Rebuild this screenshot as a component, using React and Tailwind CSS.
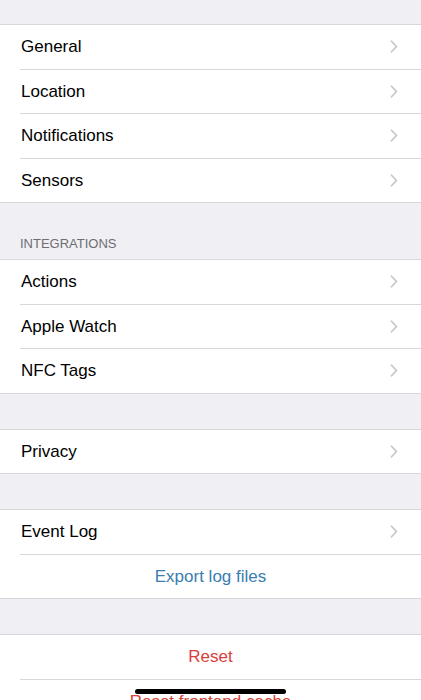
import React from "react";

const Chevron = () => (
  <svg width="8" height="13" viewBox="0 0 8 13" fill="none" className="shrink-0">
    <path d="M1.5 1.25 L6.5 6.5 L1.5 11.75" stroke="#c7c7cc" strokeWidth="1.8" strokeLinecap="round" strokeLinejoin="round" />
  </svg>
);

const Row = ({ label, last }) => (
  <div className={"flex items-stretch bg-white pl-5 " + (last ? "h-[43.5px]" : "h-[44.5px]")}>
    <div className={"flex flex-1 items-center justify-between pr-[23px] pl-px " + (last ? "" : "border-b border-[#d8d8dc]")}>
      <span className="text-[17px] text-black">{label}</span>
      <Chevron />
    </div>
  </div>
);

const ActionRow = ({ label, color, last }) => (
  <div className={"flex items-stretch bg-white pl-5 " + (last ? "h-[43.5px]" : "h-[44.5px]")}>
    <div className={"flex flex-1 items-center justify-center pr-5 " + (last ? "" : "border-b border-[#d8d8dc]")}>
      <span className={"text-[17px] " + color}>{label}</span>
    </div>
  </div>
);

const Group = ({ children }) => (
  <div className="border-y border-[#d8d8dc] bg-white">{children}</div>
);

export default function App() {
  return (
    <div className="relative h-[700px] overflow-hidden bg-[#efeff4]" style={{ fontFamily: '"Liberation Sans", Arial, sans-serif' }}>
      <div className="h-6" />
      <Group>
        <Row label="General" />
        <Row label="Location" />
        <Row label="Notifications" />
        <Row label="Sensors" last />
      </Group>
      <div className="flex h-[56px] items-end px-5 pb-[6px]">
        <span className="text-[13px] text-[#6d6d72]">INTEGRATIONS</span>
      </div>
      <Group>
        <Row label="Actions" />
        <Row label="Apple Watch" />
        <Row label="NFC Tags" last />
      </Group>
      <div className="h-[35px]" />
      <Group>
        <Row label="Privacy" last />
      </Group>
      <div className="h-[35px]" />
      <Group>
        <Row label="Event Log" />
        <ActionRow label="Export log files" color="text-[#3a7db0]" last />
      </Group>
      <div className="h-[35px]" />
      <Group>
        <ActionRow label="Reset" color="text-[#d8403a]" />
        <ActionRow label="Reset frontend cache" color="text-[#d8403a]" last />
      </Group>
      <div className="absolute bottom-[6px] left-[135px] h-[5px] w-[151px] rounded-full bg-black" />
    </div>
  );
}
